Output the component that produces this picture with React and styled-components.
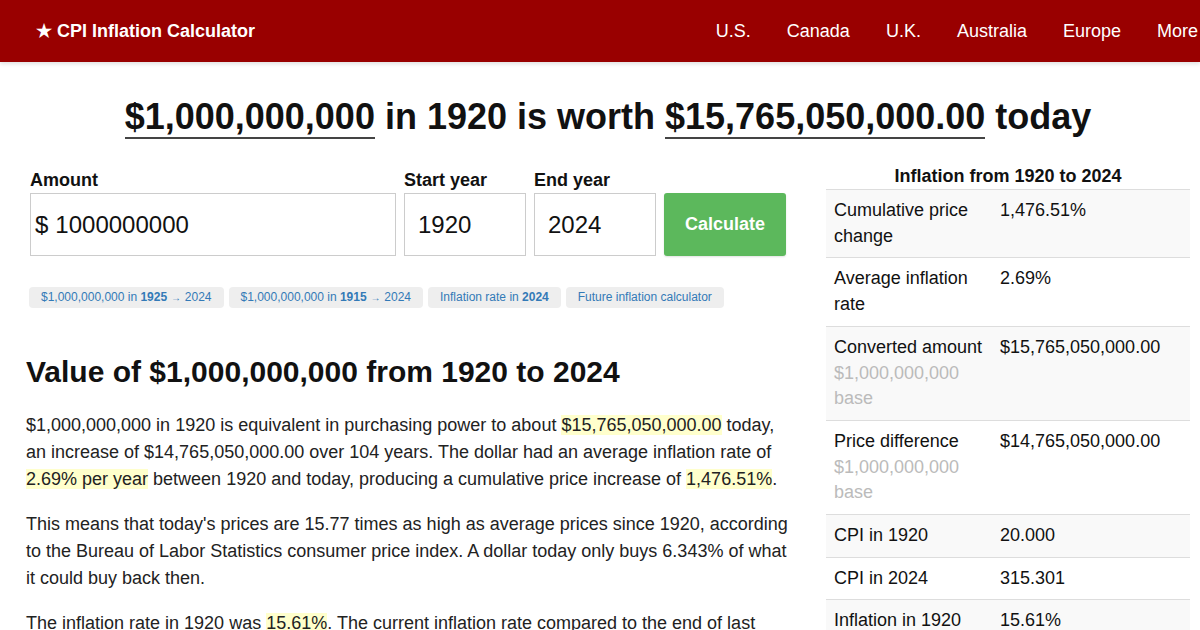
import React from 'react';
import styled, { createGlobalStyle } from 'styled-components';

const GlobalStyle = createGlobalStyle`
  html, body {
    margin: 0;
    padding: 0;
    background: #fff;
  }
  body {
    font-family: "Liberation Sans", Arial, sans-serif;
    color: #222;
    overflow: hidden;
  }
  * {
    box-sizing: border-box;
  }
`;

const Header = styled.header`
  height: 62px;
  background-color: #990000;
  box-shadow: 0 2px 4px rgba(0, 0, 0, 0.12);
  display: flex;
  align-items: center;
  padding-left: 36px;
  overflow: hidden;
  position: relative;
  z-index: 2;
`;

const Brand = styled.a`
  color: #fff;
  font-weight: bold;
  font-size: 18px;
  text-decoration: none;
  white-space: nowrap;
`;

const Nav = styled.nav`
  display: flex;
  margin-left: auto;
  margin-right: -16px;
`;

const NavItem = styled.a`
  color: #fff;
  font-size: 18px;
  padding: 0 18px;
  text-decoration: none;
  white-space: nowrap;
`;

const Page = styled.main`
  padding: 0 10px 0 26px;
`;

const Title = styled.h1`
  margin: 33px 0 0;
  text-align: center;
  font-size: 36px;
  line-height: 44px;
  font-weight: bold;
  color: #111;
`;

const Underlined = styled.span`
  border-bottom: 2px solid #444;
`;

const Columns = styled.div`
  display: grid;
  grid-template-columns: 764px 1fr;
  column-gap: 36px;
  margin-top: 30px;
`;

const Form = styled.form`
  display: flex;
  gap: 8px;
  margin-left: 4px;
  align-items: flex-end;
`;

const Field = styled.label`
  display: flex;
  flex-direction: column;
  width: ${({ wide }) => (wide ? '366px' : '122px')};
`;

const FieldLabel = styled.span`
  font-weight: bold;
  font-size: 18px;
  line-height: 22px;
  margin-bottom: 2px;
  color: #111;
`;

const InputBox = styled.div`
  height: 63px;
  border: 1px solid #ccc;
  display: flex;
  align-items: center;
  padding: 0 ${({ wide }) => (wide ? '4px' : '13px')};
  font-size: 24px;
  color: #111;
`;

const Input = styled.input`
  border: 0;
  outline: none;
  font: inherit;
  color: inherit;
  width: 100%;
  padding: 0;
  background: transparent;
`;

const Prefix = styled.span`
  margin-right: 7px;
`;

const Button = styled.button`
  width: 122px;
  height: 63px;
  background-color: #5cb85c;
  border: 0;
  border-radius: 3px;
  color: #fff;
  font-family: inherit;
  font-weight: bold;
  font-size: 18px;
  box-shadow: 0 1px 2px rgba(0, 0, 0, 0.12);
`;

const Pills = styled.div`
  display: flex;
  gap: 5px;
  margin: 31px 0 0 3px;
`;

const Pill = styled.a`
  display: inline-block;
  height: 21px;
  line-height: 21px;
  padding: 0 12px;
  background: #eee;
  border-radius: 4px;
  font-size: 12px;
  color: #337ab7;
  text-decoration: none;
  white-space: nowrap;
`;

const Arrow = styled.span`
  font-size: 10px;
  margin: 0 0.5px;
`;

const Heading = styled.h2`
  font-size: 30px;
  line-height: 34px;
  margin: 47px 0 0;
  color: #111;
`;

const Paragraph = styled.p`
  font-size: 18px;
  line-height: 27px;
  margin: ${({ first }) => (first ? '23px' : '18px')} 0 0;
`;

const Mark = styled.span`
  background-color: #ffffcc;
`;

const Sidebar = styled.aside`
  margin-top: -6px;
`;

const SideTitle = styled.div`
  text-align: center;
  font-weight: bold;
  font-size: 18px;
  line-height: 26px;
  color: #111;
`;

const Table = styled.table`
  width: 100%;
  border-collapse: collapse;
  font-size: 18px;
  line-height: 1.42857;
`;

const Row = styled.tr`
  background-color: ${({ striped }) => (striped ? '#f9f9f9' : '#fff')};
  border-top: 1px solid #ddd;
`;

const Cell = styled.td`
  padding: 8px;
  vertical-align: top;
  width: ${({ label }) => (label ? '166px' : 'auto')};
  color: #111;
`;

const Note = styled.div`
  color: #bbb;
`;

const stats = [
  { label: 'Cumulative price change', value: '1,476.51%' },
  { label: 'Average inflation rate', value: '2.69%' },
  { label: 'Converted amount', note: '$1,000,000,000 base', value: '$15,765,050,000.00' },
  { label: 'Price difference', note: '$1,000,000,000 base', value: '$14,765,050,000.00' },
  { label: 'CPI in 1920', value: '20.000' },
  { label: 'CPI in 2024', value: '315.301' },
  { label: 'Inflation in 1920', value: '15.61%' },
  { label: 'Inflation in 2024', value: '2.89%' },
];

const navLinks = ['U.S.', 'Canada', 'U.K.', 'Australia', 'Europe', 'More'];

const App = () => (
  <>
    <GlobalStyle />
    <Header>
      <Brand href="#">★ CPI Inflation Calculator</Brand>
      <Nav>
        {navLinks.map((link) => (
          <NavItem href="#" key={link}>
            {link}
          </NavItem>
        ))}
      </Nav>
    </Header>
    <Page>
      <Title>
        <Underlined>$1,000,000,000</Underlined> in 1920 is worth{' '}
        <Underlined>$15,765,050,000.00</Underlined> today
      </Title>
      <Columns>
        <section>
          <Form onSubmit={(e) => e.preventDefault()}>
            <Field wide>
              <FieldLabel>Amount</FieldLabel>
              <InputBox wide>
                <Prefix>$</Prefix>
                <Input defaultValue="1000000000" />
              </InputBox>
            </Field>
            <Field>
              <FieldLabel>Start year</FieldLabel>
              <InputBox>
                <Input defaultValue="1920" />
              </InputBox>
            </Field>
            <Field>
              <FieldLabel>End year</FieldLabel>
              <InputBox>
                <Input defaultValue="2024" />
              </InputBox>
            </Field>
            <Button type="submit">Calculate</Button>
          </Form>
          <Pills>
            <Pill href="#">
              $1,000,000,000 in <b>1925</b> <Arrow>→</Arrow> 2024
            </Pill>
            <Pill href="#">
              $1,000,000,000 in <b>1915</b> <Arrow>→</Arrow> 2024
            </Pill>
            <Pill href="#">
              Inflation rate in <b>2024</b>
            </Pill>
            <Pill href="#">Future inflation calculator</Pill>
          </Pills>
          <Heading>Value of $1,000,000,000 from 1920 to 2024</Heading>
          <Paragraph first>
            $1,000,000,000 in 1920 is equivalent in purchasing power to about{' '}
            <Mark>$15,765,050,000.00</Mark> today, an increase of $14,765,050,000.00 over 104
            years. The dollar had an average inflation rate of <Mark>2.69% per year</Mark> between
            1920 and today, producing a cumulative price increase of <Mark>1,476.51%</Mark>.
          </Paragraph>
          <Paragraph>
            This means that today's prices are 15.77 times as high as average prices since 1920,
            according to the Bureau of Labor Statistics consumer price index. A dollar today only
            buys 6.343% of what it could buy back then.
          </Paragraph>
          <Paragraph>
            The inflation rate in 1920 was <Mark>15.61%</Mark>. The current inflation rate compared
            to the end of last year is now 2.89%. If this number holds, $1,000,000,000 today will be
            equivalent in buying power to $1,028,900,000.00 next year.
          </Paragraph>
        </section>
        <Sidebar>
          <SideTitle>Inflation from 1920 to 2024</SideTitle>
          <Table>
            <tbody>
              {stats.map((row, i) => (
                <Row key={row.label} striped={i % 2 === 0}>
                  <Cell label>
                    {row.label}
                    {row.note && <Note>{row.note}</Note>}
                  </Cell>
                  <Cell>{row.value}</Cell>
                </Row>
              ))}
            </tbody>
          </Table>
        </Sidebar>
      </Columns>
    </Page>
  </>
);

export default App;
